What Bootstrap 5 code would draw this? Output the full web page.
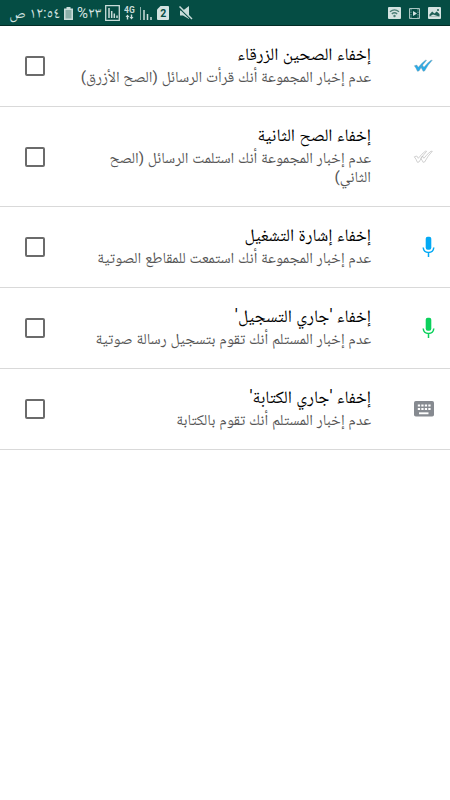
<!DOCTYPE html>
<html lang="ar" dir="rtl">
<head>
<meta charset="utf-8">
<meta name="viewport" content="width=device-width, initial-scale=1">
<title>إعدادات الخصوصية</title>
<link href="https://cdn.jsdelivr.net/npm/bootstrap@5.3.0/dist/css/bootstrap.min.css" rel="stylesheet">
<style>
body{font-family:Roboto,"Noto Naskh Arabic","Noto Sans",sans-serif;background:#fff}
.status{height:26px;background:#054d44;border-bottom:1px solid #022c26;color:#d4e3e1;padding:1px 9px 0 11px}
.status svg,.pref svg{display:block;flex:none}
.status-text{font-size:15px;line-height:24px;white-space:nowrap}
.status-time{width:49px}
.status-charge{width:24px}
.status .sim-icon{margin-left:3px}
.status .mute-icon{margin-left:10px}
.pref{border-bottom:1px solid #d9d9d9}
.pref-icon{width:79px;padding-right:17px}
.pref-icon-mic{padding-right:15px}
.pref-icon-keys{padding-right:16px}
.pref-text{padding-top:17px;padding-bottom:19px}
.pref-title{font-size:17.5px;line-height:23px;color:#000}
.pref-note{font-size:15.45px;line-height:19px;margin-top:2px;color:#555;width:296px;word-spacing:-.1px}
.pref-check{width:45px}
.pref .form-check-input{float:none;margin:0;width:20px;height:20px;border:2px solid #6b6b6b;border-radius:2px;display:block}
</style>
</head>
<body>
<header class="status d-flex align-items-center" dir="ltr">
  <span class="status-text status-time" dir="rtl">١٢:٥٤ ص</span>
  <svg class="ms-1" width="9" height="13" viewBox="0 0 9 13"><path d="M2.500 0h4v1.500H9V13H0V1.500h2.500z" fill="#c9dcd9"/><path d="M1.500 3h6v8.500h-6z" fill="#8bb0aa"/></svg>
  <span class="status-text status-charge ms-1">%٢٣</span>
  <svg class="ms-1" width="15" height="16" viewBox="0 0 15 16"><path d="M.7.7h13.600v14.600H.7z" fill="none" stroke="#c9dcd9" stroke-width="1.300"/><path d="M4 3v10M6.700 6v7M9.300 8.500V13M12 10.500V13" stroke="#c9dcd9" stroke-width="1.500"/></svg>
  <svg class="ms-1" width="12" height="16" viewBox="0 0 12 16"><text x="0" y="8" font-family="Roboto" font-size="8.500" font-weight="700" fill="#c9dcd9">4G</text><path d="M3.500 9.500 1.500 12h1.300v2.500h1.400V12h1.300zM7.500 14.500l2-2.500H8.200V9.500H6.800V12H5.500z" fill="#c9dcd9"/></svg>
  <svg class="ms-1" width="14" height="14" viewBox="0 0 14 14"><path d="M.5 1v13" stroke="#8bb0aa"/><path d="M4 4v10M7.500 8v6M11 11v3" stroke="#c9dcd9" stroke-width="1.500"/></svg>
  <svg class="sim-icon" width="12" height="14" viewBox="0 0 12 14"><path d="M3.500 0H11q1 0 1 1v12q0 1-1 1H1q-1 0-1-1V3.500z" fill="#d4e3e1"/><text x="3.200" y="11" font-family="Roboto" font-size="10.500" font-weight="700" fill="#054d44">2</text></svg>
  <svg class="mute-icon" width="14" height="14" viewBox="0 0 14 14"><path d="M1 4.500h3L10 0v13L4 9.500H1z" fill="#c9dcd9"/><path d="M0 2l12 11.500" stroke="#054d44" stroke-width="1.200"/><path d="M.5.500l12.500 12.500" stroke="#c9dcd9" stroke-width="1.500"/></svg>
  <div class="d-flex align-items-center ms-auto">
    <svg width="13" height="12" viewBox="0 0 13 12"><rect width="13" height="12" rx="1" fill="#d4e3e1"/><path d="M2 4.800q4.500-3.800 9 0M3.800 7q2.700-2.400 5.400 0" fill="none" stroke="#4c7f77" stroke-width="1.300"/><circle cx="6.500" cy="9" r="1.200" fill="#4c7f77"/></svg>
    <svg class="mx-2" width="11" height="11" viewBox="0 0 11 11"><path d="M.5.500h10v10H.500z" fill="none" stroke="#a9c5c1"/><path d="M2 1v9M9 1v9" stroke="#7fa7a1" stroke-dasharray="1.500 1"/><path d="M4 3l4 2.500L4 8z" fill="#d4e3e1"/></svg>
    <svg width="13" height="12" viewBox="0 0 13 12"><rect width="13" height="12" rx="1" fill="#d4e3e1"/><path d="M1.500 7.500l2.700-3 2.200 2 2.300-2L11.500 7v2.500h-10z" fill="#1f6057"/><path d="M1.500 9.500 5 7.500l6 2z" fill="#d4e3e1"/><circle cx="10" cy="3" r="1" fill="#1f6057"/></svg>
  </div>
</header>
<main>
  <section class="pref d-flex align-items-center">
    <div class="pref-icon"><svg width="20" height="14" viewBox="0 0 20 14"><path d="M1.300 6.800 3.800 6 5.300 8.300Q8.500 4 12.400 1.200L13.600 1.300Q9.500 5.500 6 12L4.400 12.300Q3.200 9 1.300 6.800zM7.800 8.300 9.400 6l1.500 2.300Q14 4 18 1.200l1.300.1Q15 5.500 11.600 12l-1.500.3Q9 10 7.800 8.300z" fill="#29abe8" stroke="#7f9dab" stroke-width=".4"/></svg></div>
    <div class="flex-grow-1 pref-text"><div class="pref-title">إخفاء الصحين الزرقاء</div><div class="pref-note">عدم إخبار المجموعة أنك قرأت الرسائل (الصح الأزرق)</div></div>
    <div class="pref-check"><input class="form-check-input" type="checkbox" aria-label="إخفاء الصحين الزرقاء"></div>
  </section>
  <section class="pref d-flex align-items-center">
    <div class="pref-icon"><svg width="20" height="14" viewBox="0 0 20 14"><path d="M1.300 6.800 3.800 6 5.300 8.300Q8.500 4 12.400 1.200L13.600 1.300Q9.500 5.500 6 12L4.400 12.300Q3.200 9 1.300 6.800zM7.800 8.300 9.400 6l1.500 2.300Q14 4 18 1.200l1.300.1Q15 5.500 11.600 12l-1.500.3Q9 10 7.800 8.300z" fill="#fff" stroke="#bdbdbd" stroke-width=".7"/></svg></div>
    <div class="flex-grow-1 pref-text"><div class="pref-title">إخفاء الصح الثانية</div><div class="pref-note">عدم إخبار المجموعة أنك استلمت الرسائل (الصح الثاني)</div></div>
    <div class="pref-check"><input class="form-check-input" type="checkbox" aria-label="إخفاء الصح الثانية"></div>
  </section>
  <section class="pref d-flex align-items-center">
    <div class="pref-icon pref-icon-mic"><svg width="13" height="22" viewBox="0 0 13 22"><rect x="3.700" y=".7" width="5.600" height="13" rx="2" fill="#03a9f4"/><path d="M1.200 11.500q.5 5 5.300 5t5.300-5M6.500 16.500V21" fill="none" stroke="#03a9f4" stroke-width="1.500"/></svg></div>
    <div class="flex-grow-1 pref-text"><div class="pref-title">إخفاء إشارة التشغيل</div><div class="pref-note">عدم إخبار المجموعة أنك استمعت للمقاطع الصوتية</div></div>
    <div class="pref-check"><input class="form-check-input" type="checkbox" aria-label="إخفاء إشارة التشغيل"></div>
  </section>
  <section class="pref d-flex align-items-center">
    <div class="pref-icon pref-icon-mic"><svg width="13" height="22" viewBox="0 0 13 22"><rect x="3.700" y=".7" width="5.600" height="13" rx="2" fill="#0bd15c"/><path d="M1.200 11.500q.5 5 5.300 5t5.300-5M6.500 16.500V21" fill="none" stroke="#0bd15c" stroke-width="1.500"/></svg></div>
    <div class="flex-grow-1 pref-text"><div class="pref-title">إخفاء 'جاري التسجيل'</div><div class="pref-note">عدم إخبار المستلم أنك تقوم بتسجيل رسالة صوتية</div></div>
    <div class="pref-check"><input class="form-check-input" type="checkbox" aria-label="إخفاء 'جاري التسجيل'"></div>
  </section>
  <section class="pref d-flex align-items-center">
    <div class="pref-icon pref-icon-keys"><svg width="20" height="16" viewBox="0 0 20 16"><rect width="20" height="15.500" rx="1.800" fill="#868a90"/><path d="M3.800 4.500h12.800M3.800 8h12.800" stroke="#fff" stroke-width="2.200" stroke-dasharray="2.300 1.200"/><path d="M5 12.300h9.500" stroke="#fff" stroke-width="1.900"/></svg></div>
    <div class="flex-grow-1 pref-text"><div class="pref-title">إخفاء 'جاري الكتابة'</div><div class="pref-note">عدم إخبار المستلم أنك تقوم بالكتابة</div></div>
    <div class="pref-check"><input class="form-check-input" type="checkbox" aria-label="إخفاء 'جاري الكتابة'"></div>
  </section>
</main>
<script src="https://cdn.jsdelivr.net/npm/bootstrap@5.3.0/dist/js/bootstrap.bundle.min.js"></script>
</body>
</html>
